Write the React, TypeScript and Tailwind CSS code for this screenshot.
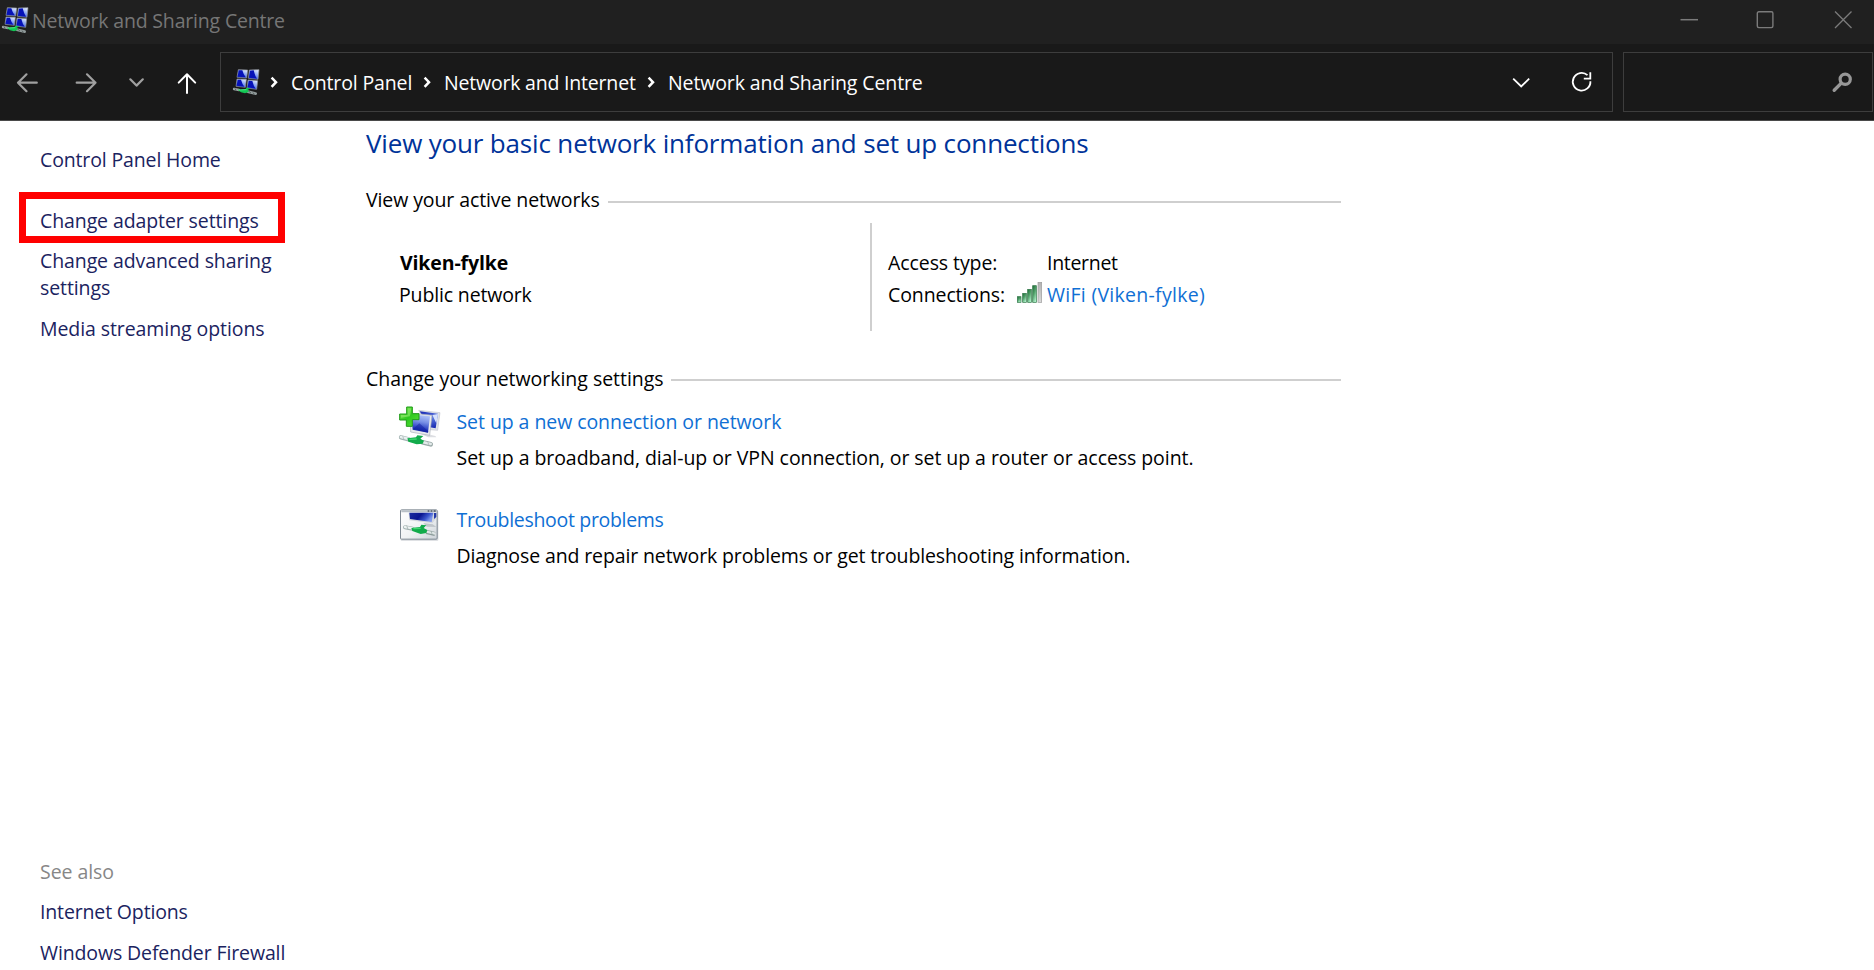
import React from "react";

function NetworkCentreIcon() {
  const screens = [
    "M22 22 L50 23 L47 47 L18 45Z",
    "M55 23 L84 22 L81 51 L52 48Z",
    "M18 50 L46 51 L43 75 L15 72Z",
    "M51 53 L80 55 L77 81 L48 77Z",
  ];
  const shades = [
    "M23 24 L34 24 Q38 38 44 45 L20 43Z",
    "M57 25 L68 24 Q72 41 78 49 L54 46Z",
    "M20 52 L30 52 Q34 66 40 73 L17 70Z",
    "M53 55 L64 56 Q68 72 74 79 L50 75Z",
  ];
  return (
    <svg width="28" height="28" viewBox="3 17 84 84" className="shrink-0">
      <defs>
        <linearGradient id="nc-screen" x1="0.35" y1="1" x2="0.8" y2="0">
          <stop offset="0" stopColor="#2038d0" />
          <stop offset="0.45" stopColor="#7d9bf2" />
          <stop offset="1" stopColor="#e4ecff" />
        </linearGradient>
      </defs>
      {screens.map((d) => (
        <path key={d} d={d} fill="url(#nc-screen)" stroke="#8f949c" strokeWidth="2" />
      ))}
      {shades.map((d) => (
        <path key={d} d={d} fill="#0612b8" />
      ))}
      <path d="M9 80 L24 83" stroke="#9aa3a3" strokeWidth="7" strokeLinecap="round" />
      <path d="M50 88 L74 94" stroke="#8f9999" strokeWidth="8" strokeLinecap="round" />
      <path d="M54 87 L60 92 M66 91 L70 96 M12 78 L15 84" stroke="#3d4444" strokeWidth="2" />
      <path d="M20 82 L44 80 L46 76 L58 78 L50 83 L54 88 L42 93 L30 90Z" fill="#12c653" />
      <path d="M24 83 L46 82" stroke="#5cf08e" strokeWidth="2.5" />
    </svg>
  );
}

function NewConnectionIcon() {
  return (
    <svg width="44" height="44" viewBox="114 150 132 132" className="shrink-0">
      <defs>
        <linearGradient id="new-front" x1="0.6" y1="0" x2="0.4" y2="1">
          <stop offset="0" stopColor="#b5c8fa" />
          <stop offset="0.4" stopColor="#7890e6" />
          <stop offset="0.75" stopColor="#2a40c2" />
          <stop offset="1" stopColor="#0c1a96" />
        </linearGradient>
        <linearGradient id="new-back" x1="0.2" y1="0" x2="0.6" y2="1">
          <stop offset="0" stopColor="#1a2bb4" />
          <stop offset="0.5" stopColor="#5f7ce2" />
          <stop offset="1" stopColor="#1c2fb4" />
        </linearGradient>
        <linearGradient id="new-plus" x1="0" y1="0" x2="1" y2="1">
          <stop offset="0" stopColor="#7be84c" />
          <stop offset="0.5" stopColor="#2dc91e" />
          <stop offset="1" stopColor="#5fe03c" />
        </linearGradient>
      </defs>
      <path d="M176 166 L240 173 L233 226 L209 224Z" fill="#dfe2e8" stroke="#b4b9c2" strokeWidth="1.5" />
      <path d="M179 169 L234 176 L227 220 L210 217Z" fill="url(#new-back)" />
      <path d="M217 180 L234 177 L229 205Z" fill="#d7e2fd" />
      <path d="M180 236 L199 236 L226 243 L229 247 L205 247Z" fill="#dcdee2" />
      <path d="M151 174 L216 181 L209 241 L152 231Z" fill="#e8eaee" stroke="#aab0ba" strokeWidth="2" />
      <path d="M153 178 L210 184 L204 233 L158 224Z" fill="url(#new-front)" />
      <path d="M160 221 L178 205 L205 229 L204 233Z" fill="#0d1b9e" opacity="0.5" />
      <path d="M140 156 H157 V176 H177 V194 H157 V214 H139 V195 H119 V177 H140Z" fill="url(#new-plus)" stroke="#219c19" strokeWidth="3" />
      <path d="M143 160 V180 H123 V188 L150 184 L154 160Z" fill="#b4f58c" opacity="0.45" />
      <path d="M123 247 L146 253" stroke="#a4b4b3" strokeWidth="13" strokeLinecap="round" />
      <path d="M123 246 L146 252" stroke="#e9f0f0" strokeWidth="8" strokeLinecap="round" />
      <path d="M187 262 L212 268" stroke="#98a7a6" strokeWidth="14" strokeLinecap="round" />
      <path d="M187 261 L212 267" stroke="#e3eaea" strokeWidth="8" strokeLinecap="round" />
      <path d="M128 243 L132 254 M203 260 L208 273" stroke="#9eafae" strokeWidth="2" />
      <path d="M142 250 L168 247 L172 241 L190 243 L181 251 L192 257 L188 266 L170 268 L145 260Z" fill="#12ab4b" />
      <path d="M148 253 L170 252" fill="none" stroke="#3fd870" strokeWidth="4" />
    </svg>
  );
}

function TroubleshootIcon() {
  return (
    <svg width="40" height="34" viewBox="117 457 120 102" className="shrink-0">
      <defs>
        <linearGradient id="ts-face" x1="0" y1="0" x2="1" y2="1">
          <stop offset="0" stopColor="#ffffff" />
          <stop offset="0.55" stopColor="#f0f2f4" />
          <stop offset="1" stopColor="#ccd2d8" />
        </linearGradient>
        <linearGradient id="ts-screen" x1="0" y1="0" x2="1" y2="0.35">
          <stop offset="0" stopColor="#1b2d9f" />
          <stop offset="0.5" stopColor="#0a1590" />
          <stop offset="0.8" stopColor="#3a55cc" />
          <stop offset="1" stopColor="#7f98ea" />
        </linearGradient>
      </defs>
      <rect x="122" y="465" width="113" height="90" rx="3" fill="#b9bec4" opacity="0.6" />
      <rect x="121.5" y="462.5" width="110" height="88" rx="3" fill="url(#ts-face)" stroke="#7f8993" strokeWidth="3" />
      <path d="M124 467 H230" stroke="#b9c0c7" strokeWidth="6" />
      <path d="M203 466 H208 M212 466 H217 M221 466 H227" stroke="#4c5763" strokeWidth="4" />
      <path d="M146 471 H229 V488 L217 503 L148 494Z" fill="#d4d8dd" />
      <path d="M148 471 H220 L215 499 L150 490Z" fill="url(#ts-screen)" />
      <path d="M222 472 H229 V484 L222 490Z" fill="#2439a8" />
      <path d="M190 502 L218 506 L229 514 L200 513Z" fill="#bfc5ca" />
      <path d="M135 515 L158 519" stroke="#a2b1b0" strokeWidth="12" strokeLinecap="round" />
      <path d="M135 514 L158 518" stroke="#edf2f2" strokeWidth="7" strokeLinecap="round" />
      <path d="M199 529 L225 535" stroke="#8c9b9a" strokeWidth="13" />
      <path d="M199 528 L226 534" stroke="#dfe6e6" strokeWidth="7" />
      <path d="M140 510 L144 521 M213 525 L217 538" stroke="#93a3a2" strokeWidth="2" />
      <path d="M154 517 L180 514 L184 507 L199 509 L191 517 L202 523 L199 532 L182 535 L157 526Z" fill="#12ab4b" />
      <path d="M160 519 L182 518" fill="none" stroke="#3fd870" strokeWidth="4" />
    </svg>
  );
}

function SignalIcon() {
  const bars = [
    [469, 245],
    [485, 235],
    [500, 223],
    [515, 212],
  ];
  return (
    <svg width="25" height="21" viewBox="468 201 75 63" className="shrink-0">
      <defs>
        <linearGradient id="sig-green" x1="0" y1="0" x2="0.6" y2="1">
          <stop offset="0" stopColor="#1c6b34" />
          <stop offset="0.5" stopColor="#4f9e68" />
          <stop offset="1" stopColor="#a9ecc4" />
        </linearGradient>
        <linearGradient id="sig-grey" x1="0" y1="0" x2="0" y2="1">
          <stop offset="0" stopColor="#b2b2b2" />
          <stop offset="1" stopColor="#d9d9d9" />
        </linearGradient>
      </defs>
      {bars.map(([x, y]) => (
        <rect key={x} x={x} y={y} width="11" height={262 - y} fill="url(#sig-green)" stroke="#2c7444" strokeWidth="2" />
      ))}
      <rect x="531" y="202" width="11" height="60" fill="url(#sig-grey)" stroke="#9b9b9b" strokeWidth="2" />
    </svg>
  );
}

function Separator() {
  return (
    <svg width="8" height="12" viewBox="0 0 8 12" className="shrink-0">
      <path d="M1.6 1.6 L6 6.2 L1.6 10.8" fill="none" stroke="#fff" strokeWidth="2.5" />
    </svg>
  );
}

function TitleBar() {
  return (
    <header className="flex h-11 shrink-0 items-start bg-[#202020]">
      <div className="flex pt-[6px] pl-[1px]">
        <NetworkCentreIcon />
      </div>
      <h1 className="pt-[7px] pl-[3px] tracking-[-0.18px] text-[#767676]">Network and Sharing Centre</h1>
      <svg width="172" height="18" viewBox="0 0 172 18" className="mt-[11px] mr-[22px] ml-auto" fill="none" stroke="#7b7b7b">
        <path d="M0.5 8.7 H18" strokeWidth="1.5" />
        <rect x="77.3" y="0.8" width="15.6" height="15.8" rx="1.5" strokeWidth="1.4" />
        <path d="M155 0.5 L171.5 17 M171.5 0.5 L155 17" strokeWidth="1.3" />
      </svg>
    </header>
  );
}

function Toolbar() {
  return (
    <nav className="flex h-[77px] shrink-0 border-b border-[#4a4a4a] bg-[#191919] pt-2 text-white">
      <svg width="220" height="60" viewBox="0 0 220 60" fill="none" strokeLinecap="round" strokeLinejoin="round" className="shrink-0">
        <g stroke="#a0a0a0" strokeWidth="2.2">
          <path d="M36.8 30.7 H18 M26.5 22.3 L18 30.7 L26.5 39.2" />
          <path d="M76.7 30.7 H95.5 M87 22.3 L95.5 30.7 L87 39.2" />
          <path d="M130.3 27.3 L136.5 33.6 L142.8 27.3" />
        </g>
        <path d="M187 41 V22.3 M178.7 30.6 L187 22.3 L195.2 30.6" stroke="#fff" strokeWidth="2" />
      </svg>
      <div className="flex h-[60px] w-[1393px] shrink-0 items-center border border-[#3d3d3d]">
        <div className="flex pl-[11px]">
          <NetworkCentreIcon />
        </div>
        <div className="flex items-center">
          <span className="pl-[10px]"><Separator /></span>
          <span className="w-[145px] pl-[13px] tracking-[-0.14px]">Control Panel</span>
          <Separator />
          <span className="w-[216px] pl-[13px] tracking-[-0.2px]">Network and Internet</span>
          <Separator />
          <span className="pl-[13px] tracking-[-0.11px]">Network and Sharing Centre</span>
        </div>
        <svg width="82" height="22" viewBox="0 0 82 22" fill="none" stroke="#fff" className="mr-[18px] ml-auto">
          <path d="M1.2 7.7 L9.2 15.5 L17.2 7.7" strokeWidth="1.8" />
          <path d="M75.5 4.2 A8.8 8.8 0 1 0 78.4 10.2" strokeWidth="1.8" />
          <path d="M78.3 1.2 V7.6 H71.8" strokeWidth="1.8" />
        </svg>
      </div>
      <div className="ml-[10px] flex h-[60px] w-[250px] items-center justify-end border border-[#3d3d3d] pr-[19px]">
        <svg width="22" height="22" viewBox="0 0 22 22" fill="none" stroke="#979797">
          <circle cx="14.2" cy="8.2" r="5.1" strokeWidth="3.2" />
          <path d="M10.3 12.1 L3.2 19.2" strokeWidth="3.4" strokeLinecap="round" />
        </svg>
      </div>
    </nav>
  );
}

function Sidebar() {
  return (
    <aside className="flex w-[366px] shrink-0 flex-col text-[#1b235f]">
      <a className="mt-[25px] ml-10 tracking-[-0.14px]">Control Panel Home</a>
      <div className="mt-[19px] ml-[19px] flex h-[51px] w-[266px] items-start border-[7px] border-[#ff0000] pt-2 pl-[14px]">
        <a className="tracking-[-0.1px]">Change adapter settings</a>
      </div>
      <a className="mt-1 ml-10 w-[240px] tracking-[-0.1px]">Change advanced sharing settings</a>
      <a className="mt-[14px] ml-10 tracking-[-0.08px]">Media streaming options</a>
      <span className="mt-auto ml-10 tracking-[-0.05px] text-[#878787]">See also</span>
      <a className="mt-[13px] ml-10 tracking-[-0.15px]">Internet Options</a>
      <a className="mt-[14px] mb-1 ml-10 tracking-[-0.12px]">Windows Defender Firewall</a>
    </aside>
  );
}

function Main() {
  return (
    <main className="w-[975px] shrink-0">
      <h2 className="mt-1 text-[26px] leading-9 tracking-[-0.17px] text-[#003399]">
        View your basic network information and set up connections
      </h2>
      <div className="mt-6 flex items-start">
        <h3 className="w-[242px] pt-px tracking-[-0.1px]">View your active networks</h3>
        <div className="mt-4 h-[2px] flex-1 bg-[#cfcfcf]" />
      </div>
      <section className="mt-[10px] flex h-[108px] items-start">
        <div className="w-[504px] pt-[26px] pl-[33px]">
          <p className="pl-px font-bold tracking-[-0.13px]">Viken-fylke</p>
          <p className="mt-[5px] tracking-[-0.15px]">Public network</p>
        </div>
        <div className="flex h-full border-l-2 border-[#cfcfcf] pt-[26px] pl-4">
          <div className="w-[128px]">
            <p className="tracking-[-0.08px]">Access type:</p>
            <p className="mt-[5px] tracking-[-0.1px]">Connections:</p>
          </div>
          <div>
            <p className="pl-[31px] tracking-[-0.3px]">Internet</p>
            <p className="mt-[5px] flex items-start">
              <span className="pt-[1px] pl-px"><SignalIcon /></span>
              <a className="pl-[5px] tracking-[0.28px] text-[#0f6fd4]">WiFi (Viken-fylke)</a>
            </p>
          </div>
        </div>
      </section>
      <div className="mt-[33px] flex items-start">
        <h3 className="w-[305px] pt-px tracking-[-0.03px]">Change your networking settings</h3>
        <div className="mt-[15px] h-[2px] flex-1 bg-[#cfcfcf]" />
      </div>
      <section className="mt-[13px] flex h-[98px] items-start pl-8">
        <NewConnectionIcon />
        <div className="pt-[3px] pl-[14.5px]">
          <a className="block tracking-[-0.07px] text-[#0f6fd4]">Set up a new connection or network</a>
          <p className="mt-[9px] tracking-[-0.065px]">
            Set up a broadband, dial-up or VPN connection, or set up a router or access point.
          </p>
        </div>
      </section>
      <section className="flex items-start pl-[33px]">
        <span className="pt-[5px]"><TroubleshootIcon /></span>
        <div className="pt-[3px] pl-[17.5px]">
          <a className="block tracking-[-0.32px] text-[#0f6fd4]">Troubleshoot problems</a>
          <p className="mt-[9px] tracking-[-0.12px]">
            Diagnose and repair network problems or get troubleshooting information.
          </p>
        </div>
      </section>
    </main>
  );
}

export default function App() {
  return (
    <div className="flex h-[970px] w-[1874px] flex-col overflow-hidden bg-white font-['Open_Sans','Noto_Sans',sans-serif] text-[19.5px] leading-[27px] text-black">
      <TitleBar />
      <Toolbar />
      <div className="flex min-h-0 flex-1">
        <Sidebar />
        <Main />
      </div>
    </div>
  );
}
